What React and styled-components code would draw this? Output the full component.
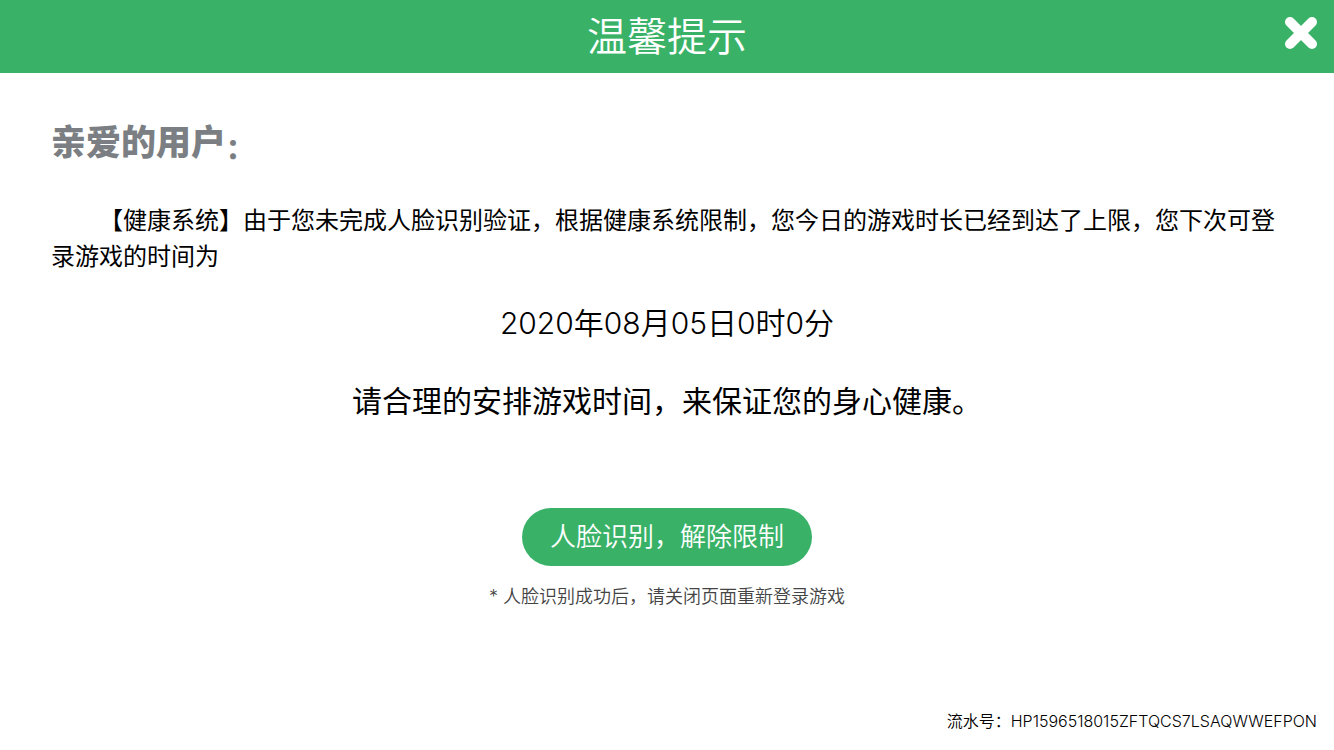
import React from 'react';
import styled, { createGlobalStyle } from 'styled-components';

const GlobalStyle = createGlobalStyle`
  * {
    box-sizing: border-box;
  }

  body {
    margin: 0;
    background: #fff;
    color: #000;
    font-family: Inter, 'Noto Sans CJK SC', sans-serif;
  }
`;

const Page = styled.div`
  min-height: 100vh;
  display: flex;
  flex-direction: column;
`;

const Header = styled.header`
  display: grid;
  grid-template-columns: 1fr auto 1fr;
  align-items: center;
  height: 73px;
  padding: 0 16px;
  background: #39b268;
  color: #fff;
`;

const Title = styled.h1`
  grid-column: 2;
  margin: 0;
  font-size: 40px;
  font-weight: 350;
  line-height: 72px;
`;

const CloseButton = styled.button`
  justify-self: end;
  display: flex;
  margin-bottom: 8px;
  padding: 0;
  border: 0;
  background: none;
  color: inherit;
  cursor: pointer;
`;

const Main = styled.main`
  flex: 1;
  padding: 45px 51px 0;
`;

const Greeting = styled.h2`
  margin: 0;
  color: #7b7f83;
  font-size: 35px;
  font-weight: 900;
  line-height: 48px;
`;

const Colon = styled.span`
  font-size: 28px;
  line-height: 1;
  vertical-align: -4px;
`;

const Message = styled.p`
  margin: 37px 0 0;
  font-size: 24px;
  line-height: 36px;
  text-indent: 48px;
`;

const Notice = styled.div`
  margin-top: 24px;
  display: flex;
  flex-direction: column;
  align-items: center;
  gap: 30px;

  p {
    margin: 0;
    font-size: 30px;
    line-height: 48px;
  }
`;

const DateText = styled.p`
  font-weight: 350;
`;

const Actions = styled.div`
  margin-top: 83px;
  display: flex;
  flex-direction: column;
  align-items: center;
  gap: 18px;
`;

const VerifyButton = styled.button`
  height: 58px;
  padding: 0 28px;
  border: 0;
  border-radius: 29px;
  background: #39b268;
  color: #fff;
  font-family: inherit;
  font-size: 26px;
  font-weight: 350;
  line-height: 58px;
  cursor: pointer;
`;

const Hint = styled.p`
  margin: 0;
  color: #444;
  font-size: 18px;
  font-weight: 350;
  line-height: 26px;
`;

const Footer = styled.footer`
  padding: 0 17px 17px;
  font-size: 16px;
  font-weight: 350;
  line-height: 24px;
  text-align: right;
`;

function App() {
  return (
    <Page lang="zh-CN">
      <GlobalStyle />
      <Header>
        <Title>温馨提示</Title>
        <CloseButton type="button" aria-label="关闭">
          <svg width="34" height="34" viewBox="0 0 34 34" fill="none">
            <path d="M6 6L28 28M28 6L6 28" stroke="currentColor" strokeWidth="10" strokeLinecap="round" />
          </svg>
        </CloseButton>
      </Header>

      <Main>
        <Greeting>
          亲爱的用户<Colon>：</Colon>
        </Greeting>
        <Message>
          【健康系统】由于您未完成人脸识别验证，根据健康系统限制，您今日的游戏时长已经到达了上限，您下次可登录游戏的时间为
        </Message>

        <Notice>
          <DateText>2020年08月05日0时0分</DateText>
          <p>请合理的安排游戏时间，来保证您的身心健康。</p>
        </Notice>

        <Actions>
          <VerifyButton type="button">人脸识别，解除限制</VerifyButton>
          <Hint>* 人脸识别成功后，请关闭页面重新登录游戏</Hint>
        </Actions>
      </Main>

      <Footer>流水号：HP1596518015ZFTQCS7LSAQWWEFPON</Footer>
    </Page>
  );
}

export default App;
